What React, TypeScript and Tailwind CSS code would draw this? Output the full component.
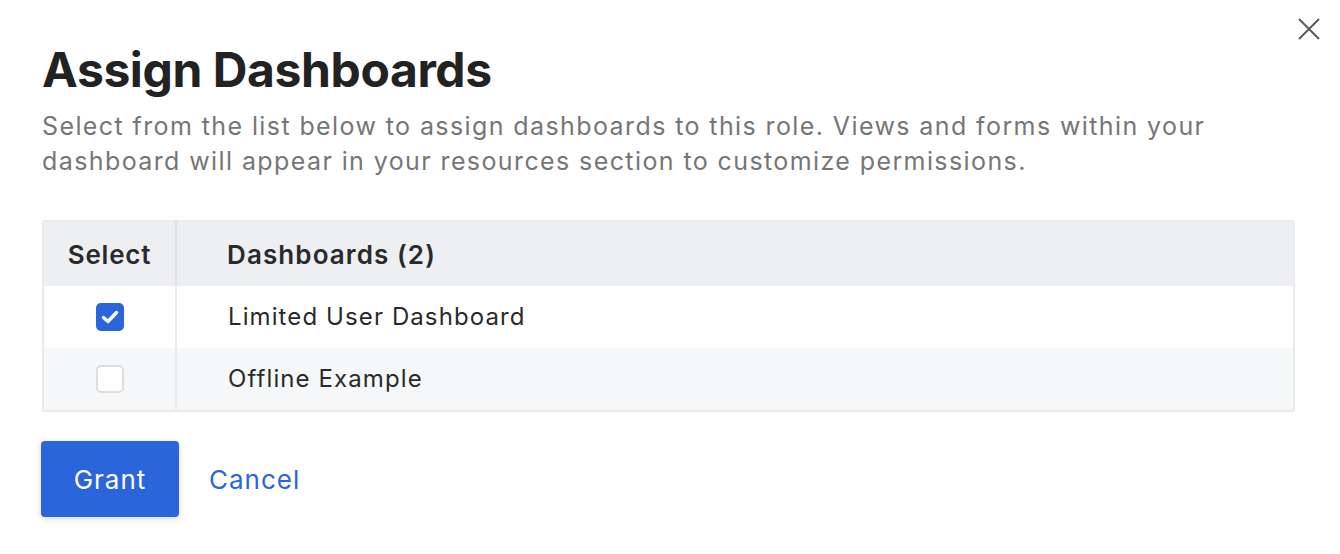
import React from "react";

function Check() {
  return (
    <svg width="22" height="22" viewBox="0 0 22 22" fill="none">
      <path d="M4.5 11.5 L9 15.5 L17.5 6.5" stroke="white" strokeWidth="3.4" strokeLinecap="round" strokeLinejoin="round" />
    </svg>
  );
}

export default function App() {
  const rows = [
    { name: "Limited User Dashboard", checked: true, bg: "bg-white" },
    { name: "Offline Example", checked: false, bg: "bg-[#f6f7f9]" },
  ];
  return (
    <div
      className="relative w-[1340px] h-[554px] bg-white overflow-hidden"
      style={{ fontFamily: "Inter, 'Noto Sans', sans-serif" }}
    >
      <button className="absolute right-[20px] top-[18px] w-[22px] h-[22px] text-[#5a5a5a]" aria-label="Close">
        <svg width="22" height="22" viewBox="0 0 22 22" fill="none">
          <path d="M1 1 L21 21 M21 1 L1 21" stroke="currentColor" strokeWidth="2" />
        </svg>
      </button>
      <div className="pl-[42px] pr-[45px] pt-[40px]">
        <h1 className="text-[48px] leading-[60px] font-bold text-[#222222] tracking-[-0.4px]">Assign Dashboards</h1>
        <p className="mt-[9px] text-[25px] leading-[35px] tracking-[1.4px] text-[#767676] w-[1220px]">
          Select from the list below to assign dashboards to this role. Views and forms within your dashboard will appear in your resources section to customize permissions.
        </p>
        <div className="mt-[41px] w-[1253px] border-2 border-[#ebebeb] rounded-[3px] overflow-hidden">
          <div className="flex h-[64px] bg-[#eeeff3] items-center">
            <div className="w-[133px] h-full flex items-center justify-center border-r-2 border-[#e2e2e5] text-[26px] tracking-[0.8px] font-semibold text-[#2a2a2a]">
              Select
            </div>
            <div className="pl-[50px] text-[26px] tracking-[1.1px] font-semibold text-[#2a2a2a]">Dashboards (2)</div>
          </div>
          {rows.map((r, i) => (
            <div key={i} className={`flex h-[62px] items-center ${r.bg}`}>
              <div className="w-[133px] h-full flex items-center justify-center border-r-2 border-[#ebebeb]">
                {r.checked ? (
                  <div className="w-[28px] h-[28px] rounded-[5px] bg-[#2b65db] flex items-center justify-center">
                    <Check />
                  </div>
                ) : (
                  <div className="w-[28px] h-[28px] rounded-[5px] border-2 border-[#dedede] bg-white" />
                )}
              </div>
              <div className="pl-[51px] text-[24px] tracking-[1.1px] text-[#2a2a2a]">{r.name}</div>
            </div>
          ))}
        </div>
        <div className="mt-[29px] flex items-center">
          <button className="w-[138px] h-[76px] -ml-[1px] rounded-[4px] bg-[#2b65db] text-white text-[26px] tracking-[1px] shadow-[0_2px_6px_rgba(0,0,0,0.15)]">
            Grant
          </button>
          <button className="ml-[30px] text-[26px] tracking-[1px] text-[#2b65db]">Cancel</button>
        </div>
      </div>
    </div>
  );
}
